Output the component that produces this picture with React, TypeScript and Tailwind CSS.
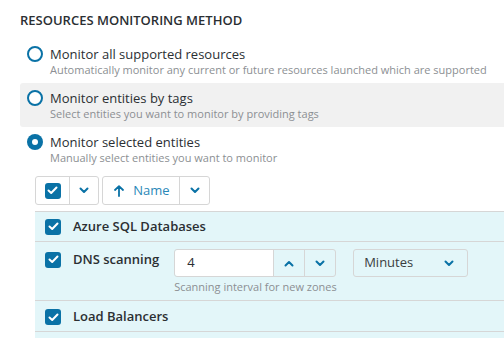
import React from "react";

const BLUE = "#0a72a6";

const Chevron = ({ up = false }: { up?: boolean }) => (
  <svg width="10" height="7" viewBox="0 0 10 7" className={up ? "rotate-180" : ""}>
    <path d="M1.5 1.5 L5 5 L8.5 1.5" fill="none" stroke={BLUE} strokeWidth="2" strokeLinecap="round" strokeLinejoin="round" />
  </svg>
);

const Check = () => (
  <span className="flex h-4 w-4 items-center justify-center rounded-[3px] bg-[#0a72a6]">
    <svg width="11" height="9" viewBox="0 0 11 9">
      <path d="M1.5 4.5 L4.2 7 L9.5 1.5" fill="none" stroke="white" strokeWidth="2" strokeLinecap="round" strokeLinejoin="round" />
    </svg>
  </span>
);

const Radio = ({ checked }: { checked: boolean }) => (
  <span
    className={
      checked
        ? "mt-[1px] flex h-4 w-4 shrink-0 items-center justify-center rounded-full bg-[#0a72a6]"
        : "mt-[1px] h-4 w-4 shrink-0 rounded-full border-[2.5px] border-[#0a72a6] bg-white"
    }
  >
    {checked && <span className="h-[6px] w-[6px] rounded-full bg-white" />}
  </span>
);

const options = [
  {
    label: "Monitor all supported resources",
    sub: "Automatically monitor any current or future resources launched which are supported",
    checked: false,
    hover: false,
  },
  {
    label: "Monitor entities by tags",
    sub: "Select entities you want to monitor by providing tags",
    checked: false,
    hover: true,
  },
  {
    label: "Monitor selected entities",
    sub: "Manually select entities you want to monitor",
    checked: true,
    hover: false,
  },
];

export default function App() {
  return (
    <div className="h-[338px] w-[504px] overflow-hidden bg-white pl-5 pt-[12px] font-['Open_Sans',sans-serif] text-[#2b2f33]">
      <div className="text-[13px] font-semibold uppercase leading-4">Resources monitoring method</div>

      <div className="mt-[11px]">
        {options.map((o) => (
          <div
            key={o.label}
            className={`flex h-[44px] items-start gap-[7px] rounded-l-[3px] pl-[7px] pt-[6px] ${o.hover ? "bg-[#f1f1f1]" : ""}`}
          >
            <Radio checked={o.checked} />
            <div>
              <div className="text-[13px] leading-[18px]">{o.label}</div>
              <div className="text-[11px] leading-[14px] text-[#8c8f93]">{o.sub}</div>
            </div>
          </div>
        ))}
      </div>

      <div className="ml-[15px] mt-[5px] flex gap-[3px]">
        <div className="flex h-[29px] rounded-[3px] border border-[#d6d6d6]">
          <div className="flex w-[34px] items-center justify-center border-r border-[#d6d6d6]">
            <Check />
          </div>
          <div className="flex w-[28px] items-center justify-center">
            <Chevron />
          </div>
        </div>
        <div className="flex h-[29px] rounded-[3px] border border-[#d6d6d6]">
          <div className="flex w-[77px] items-center justify-center gap-[9px] border-r border-[#d6d6d6] pl-[2px] text-[13px] text-[#2a88b8]">
            <svg width="10" height="12" viewBox="0 0 10 12">
              <path d="M5 11 V1.5 M1 5 L5 1.2 L9 5" fill="none" stroke={BLUE} strokeWidth="1.8" strokeLinecap="round" strokeLinejoin="round" />
            </svg>
            <span>Name</span>
          </div>
          <div className="flex w-[29px] items-center justify-center">
            <Chevron />
          </div>
        </div>
      </div>

      <div className="ml-[15px] mt-[6px] border-t border-[#d6d6d6] bg-[#e3f6f9]">
        <div className="flex h-[30px] items-center gap-3 border-b border-[#d6d6d6] pl-[10px]">
          <Check />
          <span className="text-[13px] font-semibold">Azure SQL Databases</span>
        </div>

        <div className="flex h-[59px] items-start border-b border-[#d6d6d6] pl-[10px] pt-[7px]">
          <div className="flex items-center gap-3 pt-[1px]">
            <Check />
            <span className="text-[13px] font-semibold">DNS scanning</span>
          </div>
          <div className="ml-[15px]">
            <div className="flex">
              <div className="flex h-[28px] rounded-[3px] border border-[#d6d6d6]">
                <div className="flex w-[98px] items-center rounded-l-[3px] bg-white pl-[12px] text-[13px]">4</div>
                <div className="flex w-[31px] items-center justify-center border-l border-[#d6d6d6]">
                  <Chevron up />
                </div>
                <div className="flex w-[31px] items-center justify-center border-l border-[#d6d6d6]">
                  <Chevron />
                </div>
              </div>
              <div className="ml-[17px] flex h-[28px] w-[115px] items-center justify-between rounded-[3px] border border-[#d6d6d6] pl-[10px] pr-[13px] text-[13px] text-[#3a3d40]">
                <span>Minutes</span>
                <Chevron />
              </div>
            </div>
            <div className="mt-[3px] text-[11px] leading-[14px] text-[#8c8f93]">Scanning interval for new zones</div>
          </div>
        </div>

        <div className="flex h-[31px] items-center gap-3 border-b border-[#d6d6d6] pl-[10px] pt-[2px]">
          <Check />
          <span className="text-[13px] font-semibold">Load Balancers</span>
        </div>
        <div className="h-[10px]" />
      </div>
    </div>
  );
}
